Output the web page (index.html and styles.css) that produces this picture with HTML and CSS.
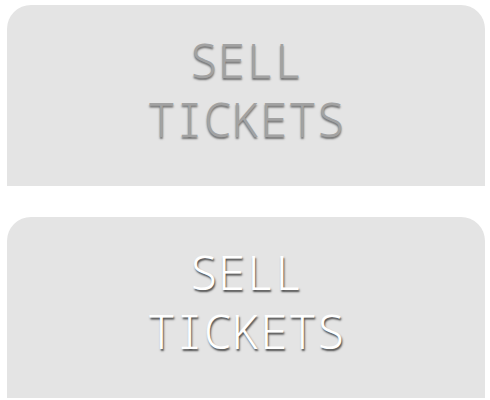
FILE: index.html
```html
<!DOCTYPE html>
<html>
<head>
<meta charset="utf-8">
<link rel="stylesheet" href="styles.css">
</head>
<body>
<div class="stack">
  <div class="tile tile-dim"><span class="label">SELL<br>TICKETS</span></div>
  <div class="tile tile-lit"><span class="label">SELL<br>TICKETS</span></div>
</div>
</body>
</html>
```

FILE: styles.css
```css
html, body {
  margin: 0;
  padding: 0;
  background: #ffffff;
}
.stack {
  display: flex;
  flex-direction: column;
  gap: 31px;
  padding: 5px 5px 0 7px;
}
.tile {
  height: 181px;
  background: #e4e4e4;
  border-radius: 24px 24px 0 0;
  box-sizing: border-box;
  padding-top: 26px;
  text-align: center;
}
.label {
  font-family: "Noto Sans Mono", "DejaVu Sans Mono", monospace;
  font-weight: 300;
  font-size: 47px;
  line-height: 59px;
}
.tile-dim .label {
  color: #a2a2a2;
  text-shadow: 0 2px 2px #6e6e6e;
}
.tile-lit .label {
  color: #ffffff;
  text-shadow: 1px 2px 2px #4a4a4a;
}
```
